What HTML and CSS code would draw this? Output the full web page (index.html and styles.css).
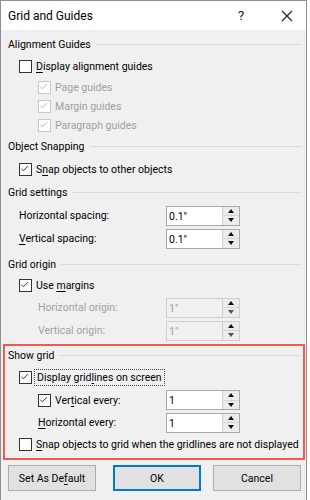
FILE: index.html
```html
<!doctype html>
<html lang="en">
<head>
  <meta charset="UTF-8">
  <title>Grid and Guides</title>
  <link rel="stylesheet" href="styles.css">
</head>
<body>
  <div class="dialog">
    <div class="titlebar">
      <span class="title">Grid and Guides</span>
      <span class="help">?</span>
      <span class="close">
        <svg width="12" height="12" viewBox="0 0 12 12"><path d="M1 1 L11 11 M11 1 L1 11" stroke="#222" stroke-width="1.1" fill="none"/></svg>
      </span>
    </div>

    <div class="body">
      <div class="group-head h22">Alignment Guides</div>

      <div class="row lvl1 h22">
        <span class="cb"></span>
        <span><u>D</u>isplay alignment guides</span>
      </div>
      <div class="row lvl2 h20 disabled">
        <span class="cb checked"><svg viewBox="0 0 13 13"><path d="M2.5 6.5 L5 9 L10.5 3.5"/></svg></span>
        <span>Page guides</span>
      </div>
      <div class="row lvl2 h19 disabled">
        <span class="cb checked"><svg viewBox="0 0 13 13"><path d="M2.5 6.5 L5 9 L10.5 3.5"/></svg></span>
        <span>Margin guides</span>
      </div>
      <div class="row lvl2 h19 disabled">
        <span class="cb checked"><svg viewBox="0 0 13 13"><path d="M2.5 6.5 L5 9 L10.5 3.5"/></svg></span>
        <span>Paragraph guides</span>
      </div>

      <div class="group-head h23">Object Snapping</div>
      <div class="row lvl1 h23">
        <span class="cb checked"><svg viewBox="0 0 13 13"><path d="M2.5 6.5 L5 9 L10.5 3.5"/></svg></span>
        <span>S<u>n</u>ap objects to other objects</span>
      </div>

      <div class="group-head h23">Grid settings</div>
      <div class="row field lvl1 h23">
        <span class="label"><span>Horizontal spacing:</span></span>
        <span class="spin"><span class="value">0.1"</span><span class="arrows"><span class="up"></span><span class="down"></span></span></span>
      </div>
      <div class="row field lvl1 h23">
        <span class="label"><span><u>V</u>ertical spacing:</span></span>
        <span class="spin"><span class="value">0.1"</span><span class="arrows"><span class="up"></span><span class="down"></span></span></span>
      </div>

      <div class="group-head h22 gap-top">Grid origin</div>
      <div class="row lvl1 h21">
        <span class="cb checked"><svg viewBox="0 0 13 13"><path d="M2.5 6.5 L5 9 L10.5 3.5"/></svg></span>
        <span>Use <u>m</u>argins</span>
      </div>
      <div class="row field lvl2 h23 disabled">
        <span class="label"><span>Horizontal origin:</span></span>
        <span class="spin"><span class="value">1"</span><span class="arrows"><span class="up"></span><span class="down"></span></span></span>
      </div>
      <div class="row field lvl2 h23 disabled">
        <span class="label"><span>Vertical origin:</span></span>
        <span class="spin"><span class="value">1"</span><span class="arrows"><span class="up"></span><span class="down"></span></span></span>
      </div>

      <div class="highlight">
        <div class="group-head h19">Show grid</div>
        <div class="row lvl1 h24">
          <span class="cb checked"><svg viewBox="0 0 13 13"><path d="M2.5 6.5 L5 9 L10.5 3.5"/></svg></span>
          <span class="focus">Display grid<u>l</u>ines on screen</span>
        </div>
        <div class="row field lvl2 h22">
          <span class="label">
            <span class="cb checked"><svg viewBox="0 0 13 13"><path d="M2.5 6.5 L5 9 L10.5 3.5"/></svg></span>
            <span>Ver<u>t</u>ical every:</span>
          </span>
          <span class="spin"><span class="value">1</span><span class="arrows"><span class="up"></span><span class="down"></span></span></span>
        </div>
        <div class="row field lvl2 h23">
          <span class="label"><span><u>H</u>orizontal every:</span></span>
          <span class="spin"><span class="value">1</span><span class="arrows"><span class="up"></span><span class="down"></span></span></span>
        </div>
        <div class="row lvl1 h21">
          <span class="cb"></span>
          <span><u>S</u>nap objects to grid when the gridlines are not displayed</span>
        </div>
      </div>

      <div class="buttons">
        <button class="btn">Set As De<u>f</u>ault</button>
        <button class="btn default">OK</button>
        <button class="btn">Cancel</button>
      </div>
    </div>
  </div>
</body>
</html>
```

FILE: styles.css
```css
*{
  box-sizing: border-box;
}

html, body{
  margin: 0;
  padding: 0;
  background: #fff;
}

body{
  color: #000;
  font-family: Roboto, "Noto Sans", sans-serif;
  font-size: 10.5px;
}

u{
  text-decoration-thickness: 1px;
  text-underline-offset: 2px;
}

.dialog{
  width: 307px;
  height: 500px;
  background: #f0f0f0;
  border: 1px solid #8f8f8f;
  border-bottom: none;
}

/* title bar */

.titlebar{
  display: flex;
  align-items: center;
  height: 29px;
  padding-left: 7px;
  background: #fff;
}

.title{
  flex: 1;
  font-size: 12px;
}

.help{
  width: 33px;
  font-size: 13px;
  color: #222;
}

.close{
  display: flex;
  width: 35px;
  padding-left: 10px;
}

/* body */

.body{
  padding: 3px 4px 0 7px;
}

.h18{ height: 18px; }
.h19{ height: 19px; }
.h20{ height: 20px; }
.h21{ height: 21px; }
.h22{ height: 22px; }
.h23{ height: 23px; }
.h24{ height: 24px; }

.group-head{
  display: flex;
  align-items: center;
  gap: 5px;
  white-space: nowrap;
}

.group-head::after{
  content: "";
  flex: 1;
  height: 1px;
  background: #dadada;
}

.gap-top{
  margin-top: 3px;
}

.row{
  display: flex;
  align-items: center;
  gap: 4px;
  white-space: nowrap;
}

.lvl1{
  padding-left: 11px;
}

.lvl2{
  padding-left: 30px;
}

.disabled{
  color: #a0a0a0;
}

/* checkboxes */

.cb{
  display: inline-block;
  flex: none;
  width: 13px;
  height: 13px;
  background: #fff;
  border: 1px solid #333;
}

.cb svg{
  display: block;
  width: 11px;
  height: 11px;
}

.cb path{
  fill: none;
  stroke: #222;
  stroke-width: 1.1;
  transform: translate(-1px, -1px);
}

.disabled .cb{
  border-color: #c8c8c8;
}

.disabled .cb path{
  stroke: #b0b0b0;
}

.focus{
  padding: 0 1px;
  outline: 1px dotted #444;
  outline-offset: 1px;
}

/* spin fields */

.field .label{
  display: flex;
  align-items: center;
  gap: 4px;
  width: 143px;
}

.lvl2 .label{
  width: 124px;
}

.spin{
  display: flex;
  width: 74px;
  height: 20px;
  background: #fff;
  border: 1px solid #a9a9a9;
}

.spin .value{
  flex: 1;
  padding: 2px 0 0 2px;
  line-height: 15px;
}

.arrows{
  display: flex;
  flex-direction: column;
  width: 17px;
  border-left: 1px solid #d0d0d0;
}

.arrows span{
  display: flex;
  flex: 1;
  align-items: center;
  justify-content: center;
  background: #ececec;
}

.arrows .up{
  border-bottom: 1px solid #d4d4d4;
}

.arrows span::before{
  content: "";
  border-left: 3.5px solid transparent;
  border-right: 3.5px solid transparent;
}

.arrows .up::before{
  border-bottom: 4px solid #111;
}

.arrows .down::before{
  border-top: 4px solid #111;
}

.disabled .spin{
  background: #f0f0f0;
  border-color: #cfcfcf;
}

.disabled .arrows .down::before{
  border-top-color: #555;
}

/* annotation box */

.highlight{
  margin: 2px -3px 0 -5px;
  padding: 0 3px 3px 3px;
  border: 2px solid #f45a4c;
}

/* buttons */

.buttons{
  display: flex;
  gap: 17px;
  margin-top: 5px;
}

.btn{
  width: 88px;
  height: 26px;
  padding: 0;
  color: #000;
  font-family: inherit;
  font-size: 10.5px;
  background: #e1e1e1;
  border: 1px solid #adadad;
}

.btn.default{
  border: 2px solid #0078d7;
}

.btn + .btn + .btn{
  margin-left: -5px;
}
```
